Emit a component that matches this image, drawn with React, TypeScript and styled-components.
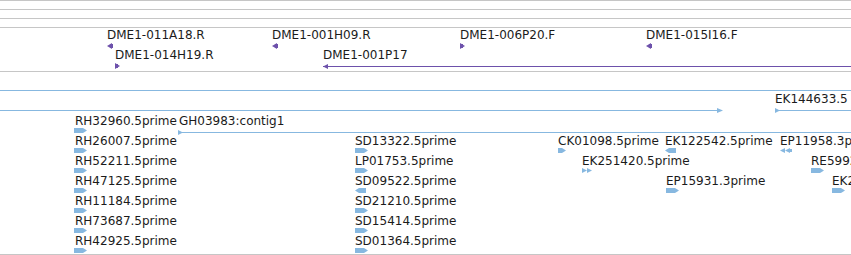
import React from 'react'

import styled, { createGlobalStyle } from 'styled-components'

const GRAY = '#c6c6c6'
const PURPLE = '#6d51ab'
const BLUE = '#87b8e0'

type Shape = 'r' | 'l' | 'rr' | 'll' | 'small-r' | 'line-l' | 'line-r' | 'line-end' | 'line'

type Feat = {
  x: number
  y: number
  label?: string
  shape: Shape
  len?: number
}

const purpleFeats: Feat[] = [
  { x: 107, y: 2, label: 'DME1-011A18.R', shape: 'l' },
  { x: 272, y: 2, label: 'DME1-001H09.R', shape: 'l' },
  { x: 460, y: 2, label: 'DME1-006P20.F', shape: 'r' },
  { x: 646, y: 2, label: 'DME1-015I16.F', shape: 'l' },
  { x: 115, y: 22, label: 'DME1-014H19.R', shape: 'r' },
  { x: 323, y: 22, label: 'DME1-001P17', shape: 'line-l', len: 540 },
]

const row = (n: number) => 44 + n * 20

const blueFeats: Feat[] = [
  { x: 0, y: 17, shape: 'line', len: 851 },
  { x: 0, y: 37, shape: 'line-end', len: 723 },
  { x: 775, y: 22, label: 'EK144633.5', shape: 'line-r', len: 90 },
  { x: 74, y: row(0), label: 'RH32960.5prime', shape: 'r' },
  { x: 178, y: row(0), label: 'GH03983:contig1', shape: 'line-r', len: 680 },
  { x: 74, y: row(1), label: 'RH26007.5prime', shape: 'r' },
  { x: 74, y: row(2), label: 'RH52211.5prime', shape: 'r' },
  { x: 74, y: row(3), label: 'RH47125.5prime', shape: 'r' },
  { x: 74, y: row(4), label: 'RH11184.5prime', shape: 'r' },
  { x: 74, y: row(5), label: 'RH73687.5prime', shape: 'r' },
  { x: 74, y: row(6), label: 'RH42925.5prime', shape: 'r' },
  { x: 355, y: row(1), label: 'SD13322.5prime', shape: 'r' },
  { x: 355, y: row(2), label: 'LP01753.5prime', shape: 'r' },
  { x: 355, y: row(3), label: 'SD09522.5prime', shape: 'l' },
  { x: 355, y: row(4), label: 'SD21210.5prime', shape: 'r' },
  { x: 355, y: row(5), label: 'SD15414.5prime', shape: 'r' },
  { x: 355, y: row(6), label: 'SD01364.5prime', shape: 'r' },
  { x: 558, y: row(1), label: 'CK01098.5prime', shape: 'small-r' },
  { x: 665, y: row(1), label: 'EK122542.5prime', shape: 'l' },
  { x: 780, y: row(1), label: 'EP11958.3prime', shape: 'll' },
  { x: 582, y: row(2), label: 'EK251420.5prime', shape: 'rr' },
  { x: 811, y: row(2), label: 'RE59923.5prime', shape: 'r' },
  { x: 666, y: row(3), label: 'EP15931.3prime', shape: 'r' },
  { x: 832, y: row(3), label: 'EK211187.5prime', shape: 'r' },
]

const GlobalStyle = createGlobalStyle`
  html, body {
    margin: 0;
    padding: 0;
    background: #fff;
  }
  body {
    font-family: 'DejaVu Sans', 'Liberation Sans', sans-serif;
    overflow: hidden;
  }
`

const Browser = styled.div`
  width: 851px;
  height: 255px;
  display: flex;
  flex-direction: column;
  overflow: hidden;
`

const Track = styled.div<{ $h: number }>`
  position: relative;
  box-sizing: border-box;
  height: ${(p) => p.$h}px;
  border-top: 1px solid ${GRAY};
  flex: none;
  overflow: hidden;

  &:last-child {
    border-bottom: 1px solid ${GRAY};
  }
`

const FeatureBox = styled.div<{ $x: number; $y: number }>`
  position: absolute;
  left: ${(p) => p.$x}px;
  top: ${(p) => p.$y - 1}px;
  display: flex;
  flex-direction: column;
  align-items: flex-start;
  white-space: nowrap;
`

const Label = styled.span<{ $shift: number }>`
  font-size: 12px;
  line-height: 13px;
  height: 13px;
  color: #1b1b1b;
  margin-left: ${(p) => p.$shift}px;
`

const GlyphSvg = styled.svg<{ $gap: number }>`
  display: block;
  margin-top: ${(p) => p.$gap}px;
  flex: none;
`

const Glyph = ({ shape, color, len = 0, purple }: { shape: Shape; color: string; len?: number; purple?: boolean }) => {
  if (purple && (shape === 'l' || shape === 'r')) {
    const pts = shape === 'l' ? '0,3 5,0 5,6' : '0,0 5,3 0,6'
    return (
      <GlyphSvg width={6} height={6} $gap={1}>
        <polygon points={pts} fill={color} />
        <rect x={shape === 'l' ? 3 : 0} y={1} width={3} height={4} fill={color} />
      </GlyphSvg>
    )
  }
  switch (shape) {
    case 'r':
      return (
        <GlyphSvg width={14} height={5} $gap={0}>
          <polygon points='0,0 9,0 13,2.5 9,5 0,5' fill={color} />
        </GlyphSvg>
      )
    case 'l':
      return (
        <GlyphSvg width={14} height={5} $gap={0}>
          <polygon points='0,2.5 4,0 11,0 11,5 4,5' fill={color} />
        </GlyphSvg>
      )
    case 'small-r':
      return (
        <GlyphSvg width={9} height={5} $gap={0}>
          <polygon points='0,0 4,0 8,2.5 4,5 0,5' fill={color} />
        </GlyphSvg>
      )
    case 'rr':
      return (
        <GlyphSvg width={11} height={5} $gap={0}>
          <polygon points='0,0 5,2.5 0,5' fill={color} />
          <polygon points='5,0 10,2.5 5,5' fill={color} />
        </GlyphSvg>
      )
    case 'll':
      return (
        <GlyphSvg width={13} height={5} $gap={0}>
          <polygon points='0,2.5 5,0 5,5' fill={color} />
          <polygon points='5,2.5 10,0 10,5' fill={color} />
          <rect x={10} y={1} width={2} height={3} fill={color} />
        </GlyphSvg>
      )
    case 'line-l':
      return (
        <GlyphSvg width={len} height={6} $gap={1}>
          <rect x={0} y={3} width={len} height={1} fill={color} />
          <polygon points='0,3.5 5,1 5,6' fill={color} />
        </GlyphSvg>
      )
    case 'line-r':
      return (
        <GlyphSvg width={len} height={5} $gap={purple ? 0 : 2}>
          <rect x={0} y={2} width={len} height={1} fill={color} />
          <polygon points='0,0 5,2.5 0,5' fill={color} />
        </GlyphSvg>
      )
    case 'line-end':
      return (
        <GlyphSvg width={len} height={5} $gap={0}>
          <rect x={0} y={2} width={len - 4} height={1} fill={color} />
          <polygon points={`${len - 6},0 ${len},2.5 ${len - 6},5`} fill={color} />
        </GlyphSvg>
      )
    default:
      return (
        <GlyphSvg width={len} height={5} $gap={0}>
          <rect x={0} y={2} width={len} height={1} fill={color} />
        </GlyphSvg>
      )
  }
}

const Feature = ({ f, color, purple }: { f: Feat; color: string; purple?: boolean }) => (
  <FeatureBox $x={f.x} $y={f.y}>
    {f.label && <Label $shift={f.shape === 'line-r' && f.x === 178 ? 1 : f.x === 74 ? 1 : 0}>{f.label}</Label>}
    <Glyph shape={f.shape} color={color} len={f.len} purple={purple} />
  </FeatureBox>
)

export default function App() {
  return (
    <>
      <GlobalStyle />
      <Browser>
        <Track $h={9} />
        <Track $h={9} />
        <Track $h={9} />
        <Track $h={44}>
          {purpleFeats.map((f) => (
            <Feature key={f.label} f={f} color={PURPLE} purple />
          ))}
        </Track>
        <Track $h={184}>
          {blueFeats.map((f, i) => (
            <Feature key={i} f={f} color={BLUE} />
          ))}
        </Track>
      </Browser>
    </>
  )
}
